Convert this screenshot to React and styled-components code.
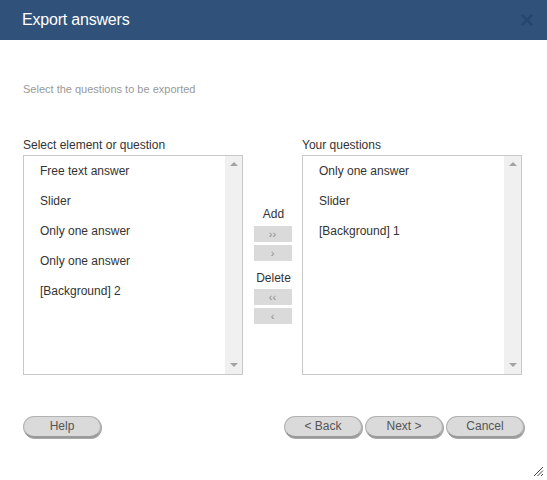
import React from "react";
import styled, { createGlobalStyle } from "styled-components";

const GlobalStyle = createGlobalStyle`
  html, body {
    margin: 0;
    padding: 0;
    background: #fff;
  }
  body {
    font-family: "Liberation Sans", Arial, sans-serif;
    color: #333;
  }
`;

const Dialog = styled.div`
  position: relative;
  width: 547px;
  height: 480px;
  background: #fff;
  overflow: hidden;
`;

const TitleBar = styled.div`
  height: 40px;
  background: #30527a;
  display: flex;
  align-items: center;
  justify-content: space-between;
  padding: 0 13px 0 22px;
`;

const Title = styled.h1`
  margin: 0;
  font-size: 16px;
  font-weight: normal;
  color: #fff;
  letter-spacing: -0.2px;
`;

const CloseButton = styled.button`
  width: 14px;
  height: 14px;
  padding: 0;
  border: 0;
  background: none;
  display: flex;
  align-items: center;
  justify-content: center;
`;

const Body = styled.div`
  padding: 0 23px;
`;

const Intro = styled.p`
  margin: 0;
  padding-top: 42px;
  line-height: 14px;
  font-size: 11px;
  color: #999;
`;

const Columns = styled.div`
  display: grid;
  grid-template-columns: 220px 59px 220px;
  margin-top: 42px;
`;

const Column = styled.div`
  display: flex;
  flex-direction: column;
`;

const ListLabel = styled.div`
  font-size: 12px;
  line-height: 14px;
  height: 14px;
  margin-bottom: 3px;
  color: #333;
`;

const ListBox = styled.div`
  display: flex;
  height: 218px;
  border: 1px solid #c8c8c8;
  background: #fff;
`;

const Items = styled.ul`
  flex: 1;
  list-style: none;
  margin: 0;
  padding: 0;
`;

const Item = styled.li`
  height: 30px;
  line-height: 30px;
  padding-left: 16px;
  font-size: 12px;
  color: #333;
`;

const Scrollbar = styled.div`
  width: 17px;
  background: #f0f0f0;
  display: flex;
  flex-direction: column;
  justify-content: space-between;
  align-items: center;
  padding: 6px 0 7px;
`;

const Arrow = styled.span`
  width: 0;
  height: 0;
  border-left: 4px solid transparent;
  border-right: 4px solid transparent;
  ${(p) =>
    p.$down
      ? "border-top: 4px solid #a3a3a3;"
      : "border-bottom: 4px solid #a3a3a3;"}
`;

const Mover = styled.div`
  display: flex;
  flex-direction: column;
  align-items: center;
  justify-content: center;
  padding-top: 17px;
`;

const MoverLabel = styled.div`
  font-size: 12px;
  line-height: 16px;
  color: #333;
  margin-top: ${(p) => p.$top || 0}px;
  margin-bottom: ${(p) => p.$bottom || 0}px;
  padding-left: 2px;
`;

const MoveButton = styled.button`
  width: 38px;
  height: 16px;
  margin-top: ${(p) => p.$top || 0}px;
  padding: 0;
  border: 0;
  background: #dadada;
  color: #8c8c8c;
  font-family: "Liberation Sans", Arial, sans-serif;
  font-size: 11px;
  line-height: 16px;
`;

const Footer = styled.div`
  display: flex;
  justify-content: space-between;
  margin-top: 41px;
`;

const ButtonGroup = styled.div`
  display: flex;
  gap: 3px;
`;

const PillButton = styled.button`
  width: 78px;
  height: 22px;
  padding: 0 0 1px;
  border: 1px solid #b3b3b3;
  border-bottom: 2px solid #9a9a9a;
  border-radius: 11px;
  background: #dadada;
  color: #555;
  font-family: "Liberation Sans", Arial, sans-serif;
  font-size: 12px;
  box-shadow: 1px 1px 0 #a8a8a8;
`;

const Grip = styled.svg`
  position: absolute;
  right: 3px;
  bottom: 3px;
`;

const source = [
  "Free text answer",
  "Slider",
  "Only one answer",
  "Only one answer",
  "[Background] 2",
];

const chosen = ["Only one answer", "Slider", "[Background] 1"];

const List = ({ label, items }) => (
  <Column>
    <ListLabel>{label}</ListLabel>
    <ListBox>
      <Items>
        {items.map((it, i) => (
          <Item key={i}>{it}</Item>
        ))}
      </Items>
      <Scrollbar>
        <Arrow />
        <Arrow $down />
      </Scrollbar>
    </ListBox>
  </Column>
);

export default function App() {
  return (
    <>
      <GlobalStyle />
      <Dialog>
        <TitleBar>
          <Title>Export answers</Title>
          <CloseButton aria-label="Close">
            <svg width="12" height="12" viewBox="0 0 12 12">
              <path
                d="M1.5 1.5 L10.5 10.5 M10.5 1.5 L1.5 10.5"
                stroke="#1e3b60"
                strokeWidth="2.4"
                strokeLinecap="round"
                opacity="0.5"
              />
            </svg>
          </CloseButton>
        </TitleBar>
        <Body>
          <Intro>Select the questions to be exported</Intro>
          <Columns>
            <List label="Select element or question" items={source} />
            <Mover>
              <MoverLabel $bottom={4}>Add</MoverLabel>
              <MoveButton>››</MoveButton>
              <MoveButton $top={3}>›</MoveButton>
              <MoverLabel $top={9} $bottom={3}>
                Delete
              </MoverLabel>
              <MoveButton>‹‹</MoveButton>
              <MoveButton $top={3}>‹</MoveButton>
            </Mover>
            <List label="Your questions" items={chosen} />
          </Columns>
          <Footer>
            <PillButton>Help</PillButton>
            <ButtonGroup>
              <PillButton>&lt; Back</PillButton>
              <PillButton>Next &gt;</PillButton>
              <PillButton>Cancel</PillButton>
            </ButtonGroup>
          </Footer>
        </Body>
        <Grip width="11" height="11" viewBox="0 0 11 11">
          <path
            d="M10 1 L1 10 M10 4.5 L4.5 10 M10 8 L8 10"
            stroke="#444"
            strokeWidth="1"
          />
        </Grip>
      </Dialog>
    </>
  );
}
